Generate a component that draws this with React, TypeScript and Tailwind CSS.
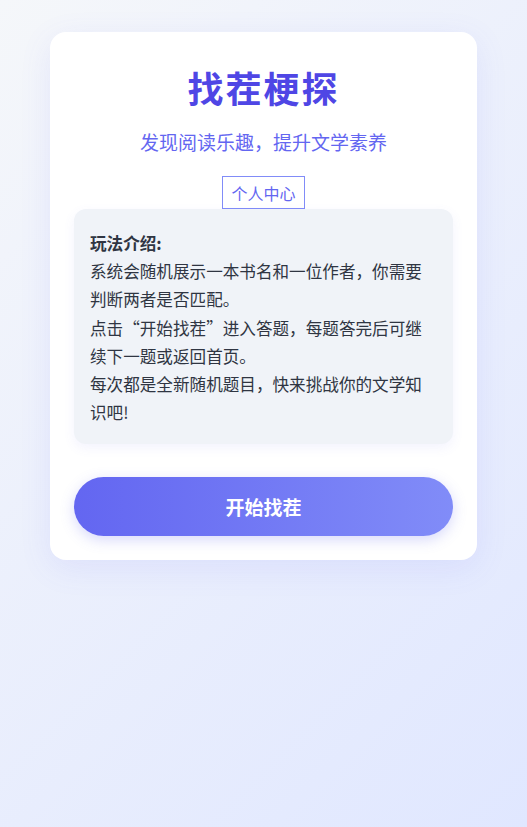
const cjk = '"Noto Sans CJK SC", "Noto Sans", sans-serif'

function InfoBox() {
  return (
    <div className="rounded-xl bg-[#f0f3f8] px-4 pt-5 pb-[18px] text-[16.6px] leading-[1.7] text-[#2f3542] shadow-[0_4px_12px_rgba(99,102,241,0.08)]">
      <strong className="font-bold">玩法介绍:</strong>
      <br />
      系统会随机展示一本书名和一位作者，你需要判断两者是否匹配。
      <br />
      点击“开始找茬”进入答题，每题答完后可继续下一题或返回首页。
      <br />
      每次都是全新随机题目，快来挑战你的文学知识吧!
    </div>
  )
}

export default function App() {
  return (
    <div
      className="min-h-screen w-full bg-[linear-gradient(135deg,#f5f7fa_0%,#e0e7ff_100%)] pt-8"
      style={{ fontFamily: cjk }}
    >
      <div className="mx-auto flex w-[427px] flex-col rounded-2xl bg-white px-6 pt-[33px] pb-6 shadow-[0_8px_32px_rgba(99,102,241,0.10)]">
        <h1 className="text-center text-[36px] leading-[44px] font-bold tracking-[2px] text-[#4f46e5]">
          找茬梗探
        </h1>
        <p className="mt-[19px] text-center text-[19px] leading-[28px] text-[#6366f1]">
          发现阅读乐趣，提升文学素养
        </p>
        <div className="mt-5 flex justify-center">
          <button className="h-[33px] border border-[#818cf8] bg-white px-2 text-[16px] leading-none text-[#6366f1]">
            个人中心
          </button>
        </div>
        <InfoBox />
        <button className="mt-[33px] h-[59px] w-full rounded-full bg-[linear-gradient(90deg,#6366f1_0%,#818cf8_100%)] text-[19px] font-bold text-white shadow-[0_4px_14px_rgba(99,102,241,0.25)]">
          开始找茬
        </button>
      </div>
    </div>
  )
}
